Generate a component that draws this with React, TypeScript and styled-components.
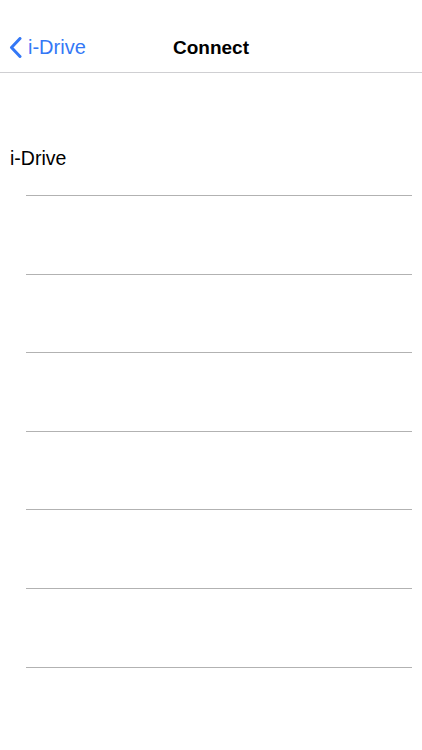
import React from "react";
import styled, { createGlobalStyle } from "styled-components";

const GlobalStyle = createGlobalStyle`
  html, body {
    margin: 0;
    padding: 0;
    background: #fff;
    font-family: "Liberation Sans", Arial, sans-serif;
  }
`;

const Screen = styled.div`
  width: 422px;
  height: 750px;
  overflow: hidden;
  background: #fff;
`;

const NavBar = styled.header`
  height: 73px;
  border-bottom: 1px solid #cfcfd2;
  display: grid;
  grid-template-columns: 1fr auto 1fr;
  align-items: center;
  padding-top: 23px;
  box-sizing: border-box;
`;

const BackButton = styled.a`
  display: flex;
  align-items: center;
  gap: 6px;
  padding-left: 9px;
  color: #3478f6;
  font-size: 20px;
  text-decoration: none;
`;

const Title = styled.h1`
  margin: 0;
  font-size: 19px;
  font-weight: 700;
  color: #000;
`;

const Section = styled.section`
  padding-top: 74px;
`;

const DeviceName = styled.div`
  padding-left: 10px;
  font-size: 19.5px;
  color: #000;
  height: 48px;
`;

const Row = styled.div`
  height: 78.6px;
  margin-left: 26px;
  margin-right: 10px;
  border-top: 1px solid #b2b2b2;
  box-sizing: border-box;
`;

export default function App() {
  const rows = Array.from({ length: 7 });
  return (
    <Screen>
      <GlobalStyle />
      <NavBar>
        <BackButton>
          <svg width="13" height="21" viewBox="0 0 13 21">
            <path
              d="M11 1.5 L2.5 10.5 L11 19.5"
              fill="none"
              stroke="#3478f6"
              strokeWidth="3"
              strokeLinecap="round"
              strokeLinejoin="round"
            />
          </svg>
          i-Drive
        </BackButton>
        <Title>Connect</Title>
        <div />
      </NavBar>
      <Section>
        <DeviceName>i-Drive</DeviceName>
        {rows.map((_, i) => (
          <Row key={i} />
        ))}
      </Section>
    </Screen>
  );
}
